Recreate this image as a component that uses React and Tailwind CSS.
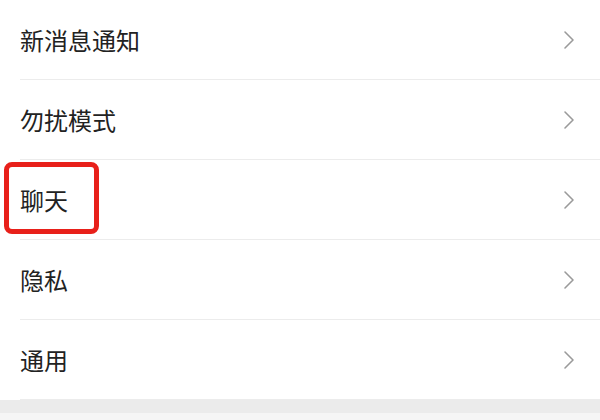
import React from "react";

const items = ["新消息通知", "勿扰模式", "聊天", "隐私", "通用"];

const Chevron = () => (
  <svg width="14" height="22" viewBox="0 0 14 22" fill="none">
    <path d="M3 3l8 8-8 8" stroke="#9a9a9a" strokeWidth="1.6" strokeLinecap="round" strokeLinejoin="round" />
  </svg>
);

const App = () => {
  return (
    <div
      className="w-[600px] h-[420px] bg-white overflow-hidden"
      style={{ fontFamily: '"Noto Sans CJK SC", "Noto Sans", sans-serif' }}
    >
      {items.map((label, i) => (
        <div key={label} className="relative">
          <div className="flex items-center justify-between h-[79px] pl-[20px] pr-[24px]">
            <span className="text-[24px] text-[#222] leading-none">{label}</span>
            <Chevron />
          </div>
          <div className="ml-[20px] h-px bg-[#ececec]" />
          {/* highlight box around 聊天 */}
          {i === 2 && (
            <div className="absolute left-[4px] top-[2px] w-[95px] h-[72px] border-[5px] border-[#e8201a] rounded-lg" />
          )}
        </div>
      ))}
      <div className="h-[13px] bg-[#ebebeb]" />
      <div className="h-[7px] bg-[#f5f5f5]" />
    </div>
  );
};

export default App;
